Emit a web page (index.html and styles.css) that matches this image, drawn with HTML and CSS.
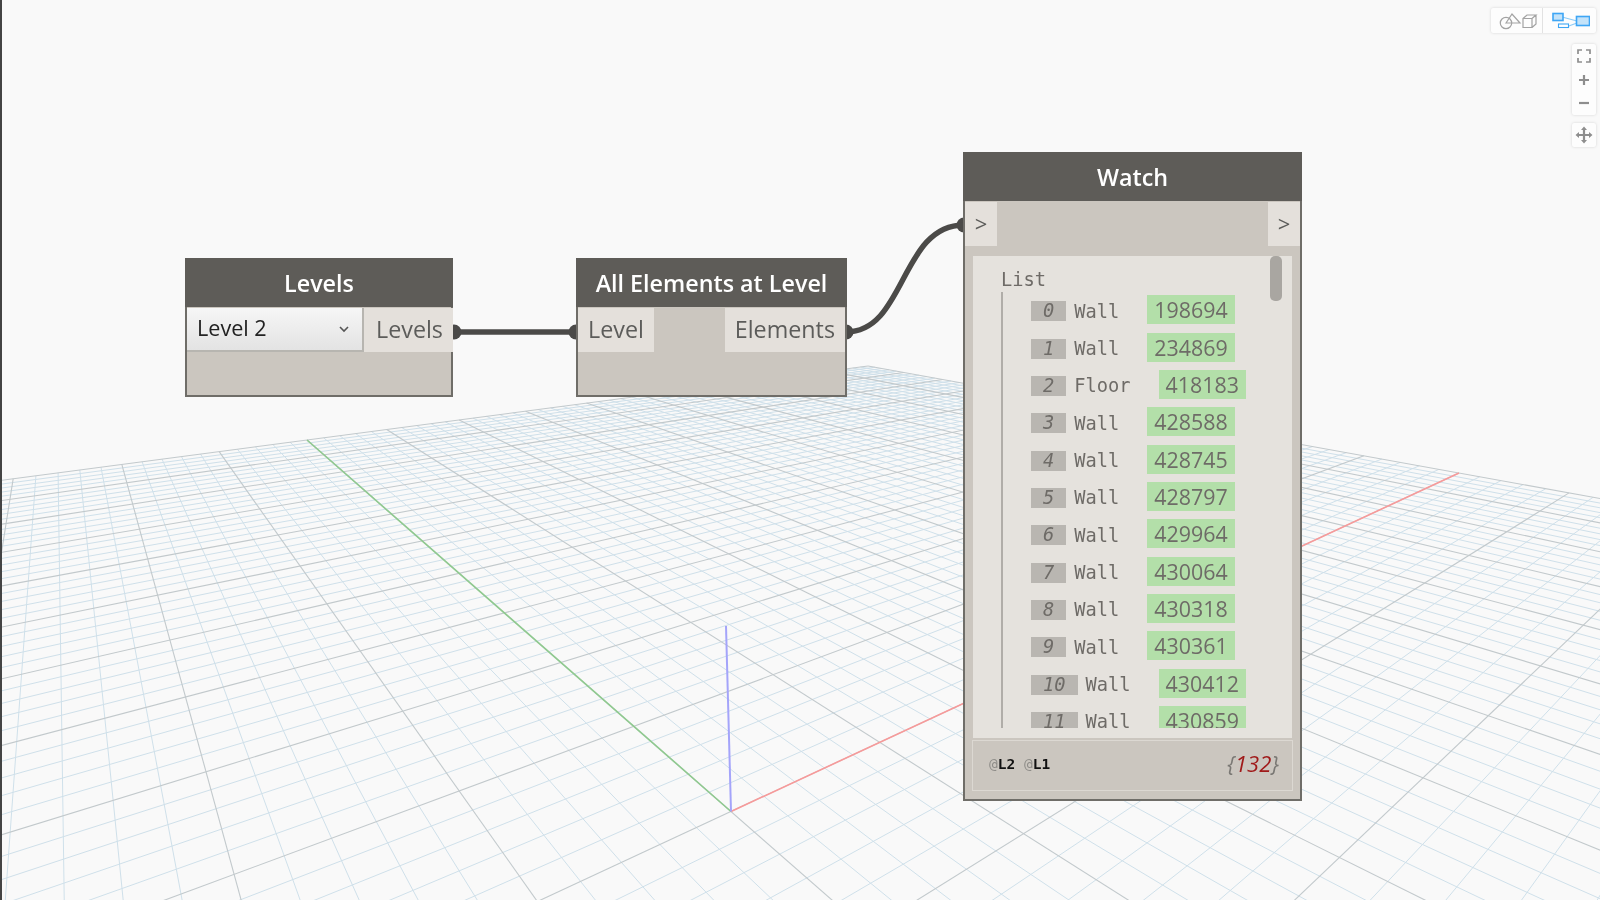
FILE: index.html
```html
<!DOCTYPE html>
<html lang="en">
<head>
    <meta charset="UTF-8">
    <meta name="viewport" content="width=device-width, initial-scale=1.0">
    <title>Levels - Watch</title>
    <link rel="stylesheet" href="styles.css">
</head>
<body>
    <div class="workspace">
        <!-- background grid, lines are added by grid.js -->
        <svg class="layer" width="1600" height="900" viewBox="0 0 1600 900">
            <g id="gridLines"></g>
            <line class="axis-x" x1="731" y1="811.5" x2="1459" y2="473"></line>
            <line class="axis-y" x1="731" y1="811.5" x2="307" y2="440"></line>
            <line class="axis-z" x1="731" y1="811.5" x2="726" y2="626"></line>
        </svg>

        <!-- wires and port ends -->
        <svg class="layer" width="1600" height="900" viewBox="0 0 1600 900">
            <circle class="port-end" cx="454" cy="332" r="7.5"></circle>
            <circle class="port-end" cx="576" cy="332" r="7.5"></circle>
            <circle class="port-end" cx="846" cy="332" r="7.5"></circle>
            <circle class="port-end" cx="964" cy="225" r="7.5"></circle>
            <path class="wire" d="M454 332 L576 332"></path>
            <path class="wire" d="M846 332 C906 332 900 225 964 225"></path>
        </svg>

        <div class="node node-levels">
            <div class="node-title">Levels</div>
            <div class="node-ports">
                <div class="dropdown">
                    <span>Level 2</span>
                    <svg class="chevron" width="12" height="8" viewBox="0 0 12 8"><path d="M2 2 L6 6 L10 2"></path></svg>
                </div>
                <div class="port port-out">Levels</div>
            </div>
        </div>

        <div class="node node-elements">
            <div class="node-title">All Elements at Level</div>
            <div class="node-ports ports-split">
                <div class="port port-in">Level</div>
                <div class="port port-out">Elements</div>
            </div>
        </div>

        <div class="node node-watch">
            <div class="node-title">Watch</div>
            <div class="node-ports ports-split">
                <div class="port port-arrow">&gt;</div>
                <div class="port port-arrow">&gt;</div>
            </div>
            <div class="watch-panel">
                <div class="scroll-thumb"></div>
                <div class="list-name">List</div>
                <div class="list-items">
                    <div class="row"><span class="index">0</span><span class="label">Wall</span><span class="value">198694</span></div>
                    <div class="row"><span class="index">1</span><span class="label">Wall</span><span class="value">234869</span></div>
                    <div class="row"><span class="index">2</span><span class="label">Floor</span><span class="value">418183</span></div>
                    <div class="row"><span class="index">3</span><span class="label">Wall</span><span class="value">428588</span></div>
                    <div class="row"><span class="index">4</span><span class="label">Wall</span><span class="value">428745</span></div>
                    <div class="row"><span class="index">5</span><span class="label">Wall</span><span class="value">428797</span></div>
                    <div class="row"><span class="index">6</span><span class="label">Wall</span><span class="value">429964</span></div>
                    <div class="row"><span class="index">7</span><span class="label">Wall</span><span class="value">430064</span></div>
                    <div class="row"><span class="index">8</span><span class="label">Wall</span><span class="value">430318</span></div>
                    <div class="row"><span class="index">9</span><span class="label">Wall</span><span class="value">430361</span></div>
                    <div class="row"><span class="index">10</span><span class="label">Wall</span><span class="value">430412</span></div>
                    <div class="row"><span class="index">11</span><span class="label">Wall</span><span class="value">430859</span></div>
                </div>
            </div>
            <div class="watch-footer">
                <div class="levels"><span class="at">@</span><b>L2</b> <span class="at">@</span><b>L1</b></div>
                <div class="count">{<span class="count-num">132</span>}</div>
            </div>
        </div>

        <div class="toolbar">
            <div class="view-switch">
                <div class="view-btn view-3d">
                    <svg width="44" height="18" viewBox="0 0 44 18">
                        <circle cx="11" cy="11" r="5.7"></circle>
                        <path d="M11 11 L17 2 L25 11 Z"></path>
                        <path d="M28 6.5 H37 V15.5 H28 Z M28 6.5 L32 3 H41 L37 6.5 M41 3 V12 L37 15.5"></path>
                    </svg>
                </div>
                <div class="view-btn view-graph">
                    <svg width="40" height="18" viewBox="0 0 40 18">
                        <path class="link" d="M12 5 L27 9 M16 15 L27 11"></path>
                        <rect class="fill" x="3" y="1.5" width="10" height="7"></rect>
                        <rect class="box" x="8.5" y="12" width="10" height="3.5"></rect>
                        <rect class="fill" x="26.5" y="4.5" width="13" height="9"></rect>
                    </svg>
                </div>
            </div>
            <div class="zoom-group">
                <svg width="24" height="71" viewBox="0 0 24 71">
                    <path d="M6 10 V6 H10 M14 6 H18 V10 M18 14 V18 H14 M10 18 H6 V14"></path>
                    <path class="thick" d="M7 36 H17 M12 31 V41"></path>
                    <path class="thick" d="M7 59 H17"></path>
                </svg>
            </div>
            <div class="zoom-group">
                <svg width="24" height="24" viewBox="0 0 24 24">
                    <path class="thick" d="M12 6 V18 M6 12 H18"></path>
                    <path class="solid" d="M12 3.5 L15 7 H9 Z M12 20.5 L15 17 H9 Z M3.5 12 L7 9 V15 Z M20.5 12 L17 9 V15 Z"></path>
                </svg>
            </div>
        </div>
    </div>
    <script src="grid.js"></script>
</body>
</html>
```

FILE: styles.css
```css
* {
    box-sizing: border-box;
}
body {
    margin: 0;
    font-family: "Open Sans", Arial, sans-serif;
    background-color: #f9f9f9;
}
.workspace {
    position: relative;
    width: 1600px;
    height: 900px;
    overflow: hidden;
    background-color: #f9f9f9;
    border-left: 2px solid #444;
    filter: blur(0.35px);
}
.layer {
    position: absolute;
    left: -2px;
    top: 0;
}
.grid-minor {
    stroke: #cfe0ea;
    stroke-width: 1;
}
.grid-major {
    stroke: #c2c9cc;
    stroke-width: 1.1;
}
.axis-x {
    stroke: #f79a9a;
    stroke-width: 1.6;
}
.axis-y {
    stroke: #8fc98f;
    stroke-width: 1.6;
}
.axis-z {
    stroke: #a4a4fa;
    stroke-width: 2;
}
.wire {
    fill: none;
    stroke: #4b4a48;
    stroke-width: 5.5;
}
.port-end {
    fill: #4b4a48;
}

/* nodes */
.node {
    position: absolute;
    display: flex;
    flex-direction: column;
    background-color: #cbc6bf;
    border: 2px solid #6f6d68;
}
.node-levels {
    left: 183px;
    top: 258px;
    width: 268px;
    height: 139px;
}
.node-elements {
    left: 574px;
    top: 258px;
    width: 271px;
    height: 139px;
}
.node-watch {
    left: 961px;
    top: 152px;
    width: 339px;
    height: 649px;
}
.node-title {
    height: 49px;
    margin: -2px -2px 0;
    flex-shrink: 0;
    background-color: #5e5c58;
    color: #fff;
    font-size: 23.3px;
    font-weight: 600;
    line-height: 50px;
    text-align: center;
}
.node-ports {
    display: flex;
    height: 44px;
    margin-top: 1px;
    flex-shrink: 0;
}
.ports-split {
    justify-content: space-between;
}
.port {
    padding: 0 10px;
    background-color: #e4e0db;
    color: #5c5c5a;
    font-size: 23.3px;
    line-height: 43px;
}
.port-arrow {
    width: 32px;
    padding: 0;
    text-align: center;
    font-size: 22px;
}
.node-levels .port-out {
    flex: 1;
    padding-left: 12px;
}
.dropdown {
    display: flex;
    align-items: center;
    justify-content: space-between;
    width: 177px;
    flex-shrink: 0;
    padding: 0 12px 4px 10px;
    background: linear-gradient(#f6f6f6, #e3e3e3);
    border-right: 2px solid #b7b5b0;
    border-bottom: 2px solid #b7b5b0;
    color: #222;
    font-size: 21.6px;
}
.chevron {
    margin-top: 3px;
}
.chevron path {
    fill: none;
    stroke: #555;
    stroke-width: 1.6;
}

/* watch */
.watch-panel {
    position: relative;
    height: 482px;
    margin: 10px 8px 0;
    padding: 0 0 10px 28px;
    background-color: #e5e2dd;
    font-family: "DejaVu Sans Mono", "Liberation Mono", monospace;
    font-size: 18.7px;
    color: #6e6b67;
}
.scroll-thumb {
    position: absolute;
    top: 0;
    right: 10px;
    width: 12px;
    height: 45px;
    border-radius: 5px;
    background-color: #a9a6a1;
}
.list-name {
    height: 36px;
    line-height: 48px;
}
.list-items {
    height: 436px;
    padding-left: 28px;
    border-left: 2px solid #b0ada8;
    overflow: hidden;
}
.row {
    display: flex;
    align-items: center;
    height: 37.35px;
    padding-bottom: 2px;
}
.index {
    height: 20px;
    margin-top: 3px;
    padding: 0 12px;
    background-color: #b9b6b1;
    font-style: italic;
    line-height: 20px;
}
.label {
    margin-top: 3px;
    margin-left: 8px;
}
.value {
    height: 29px;
    margin-left: 28px;
    padding: 0 7px;
    background-color: #b3dfa9;
    font-family: "Open Sans", Arial, sans-serif;
    font-size: 21.4px;
    line-height: 29px;
}
.watch-footer {
    display: flex;
    align-items: center;
    justify-content: space-between;
    height: 51px;
    margin: 2px 7px 0;
    padding: 0 13px 3px 16px;
    border: 1px solid #dcd8d2;
}
.levels {
    font-family: "DejaVu Sans Mono", "Liberation Mono", monospace;
    font-size: 14.5px;
    color: #111;
}
.levels b {
    font-weight: 700;
}
.at {
    color: #8f8d89;
}
.count {
    margin-top: -3px;
    font-size: 22px;
    font-style: italic;
    color: #7a7874;
}
.count-num {
    color: #a01a1a;
}

/* view controls */
.toolbar {
    position: absolute;
    top: 8px;
    right: 4px;
    display: flex;
    flex-direction: column;
    align-items: flex-end;
    gap: 8px;
}
.view-switch {
    display: flex;
    height: 25px;
    margin-bottom: 3px;
    background-color: #fdfdfd;
    border-radius: 2px;
    box-shadow: 0 0 3px rgba(0, 0, 0, 0.15);
}
.view-btn {
    display: flex;
    align-items: center;
    justify-content: center;
}
.view-3d {
    width: 52px;
    border-right: 1px solid #e2e2e2;
}
.view-3d svg {
    fill: none;
    stroke: #a3a3a3;
    stroke-width: 1.2;
}
.view-graph {
    width: 53px;
}
.view-graph .link {
    fill: none;
    stroke: #8ccbf7;
    stroke-width: 1.2;
}
.view-graph .fill {
    fill: #c4e3f9;
    stroke: #3ea6f5;
    stroke-width: 1.6;
}
.view-graph .box {
    fill: #fff;
    stroke: #3ea6f5;
    stroke-width: 1.1;
}
.zoom-group {
    display: flex;
    background-color: #fdfdfd;
    border-radius: 2px;
    box-shadow: 0 0 3px rgba(0, 0, 0, 0.15);
}
.zoom-group svg {
    fill: none;
    stroke: #8e8e8e;
    stroke-width: 1.7;
}
.zoom-group .thick {
    stroke-width: 2.2;
}
.zoom-group .solid {
    fill: #8e8e8e;
    stroke: none;
}
```

FILE: grid.js
```js
// ground plane: u runs along the red axis, v along the green one, both -1..1
var g = 1.31096, h = 1.67875;
var a = 2640.7, b = 91.4, c = 731;
var d = 281.6, e = 367.1, f = 811.5;
var nearLimit = 0.08;

function project(u, v) {
    var w = g * u + h * v + 1;
    return [(a * u + b * v + c) / w, (d * u + e * v + f) / w];
}

function addLine(group, p1, p2, major) {
    var line = document.createElementNS('http://www.w3.org/2000/svg', 'line');
    line.setAttribute('x1', p1[0].toFixed(1));
    line.setAttribute('y1', p1[1].toFixed(1));
    line.setAttribute('x2', p2[0].toFixed(1));
    line.setAttribute('y2', p2[1].toFixed(1));
    line.setAttribute('class', major ? 'grid-major' : 'grid-minor');
    group.appendChild(line);
}

var group = document.getElementById('gridLines');

// minor lines first so the major ones sit on top
[false, true].forEach(function (major) {
    for (var i = -50; i <= 50; i++) {
        if ((i % 5 === 0) !== major) continue;
        var t = i / 50;
        // stop each line before it reaches the camera plane
        var vMin = Math.max(-1, (nearLimit - 1 - g * t) / h);
        if (vMin < 1) addLine(group, project(t, vMin), project(t, 1), major);
        var uMin = Math.max(-1, (nearLimit - 1 - h * t) / g);
        if (uMin < 1) addLine(group, project(uMin, t), project(1, t), major);
    }
});
```
